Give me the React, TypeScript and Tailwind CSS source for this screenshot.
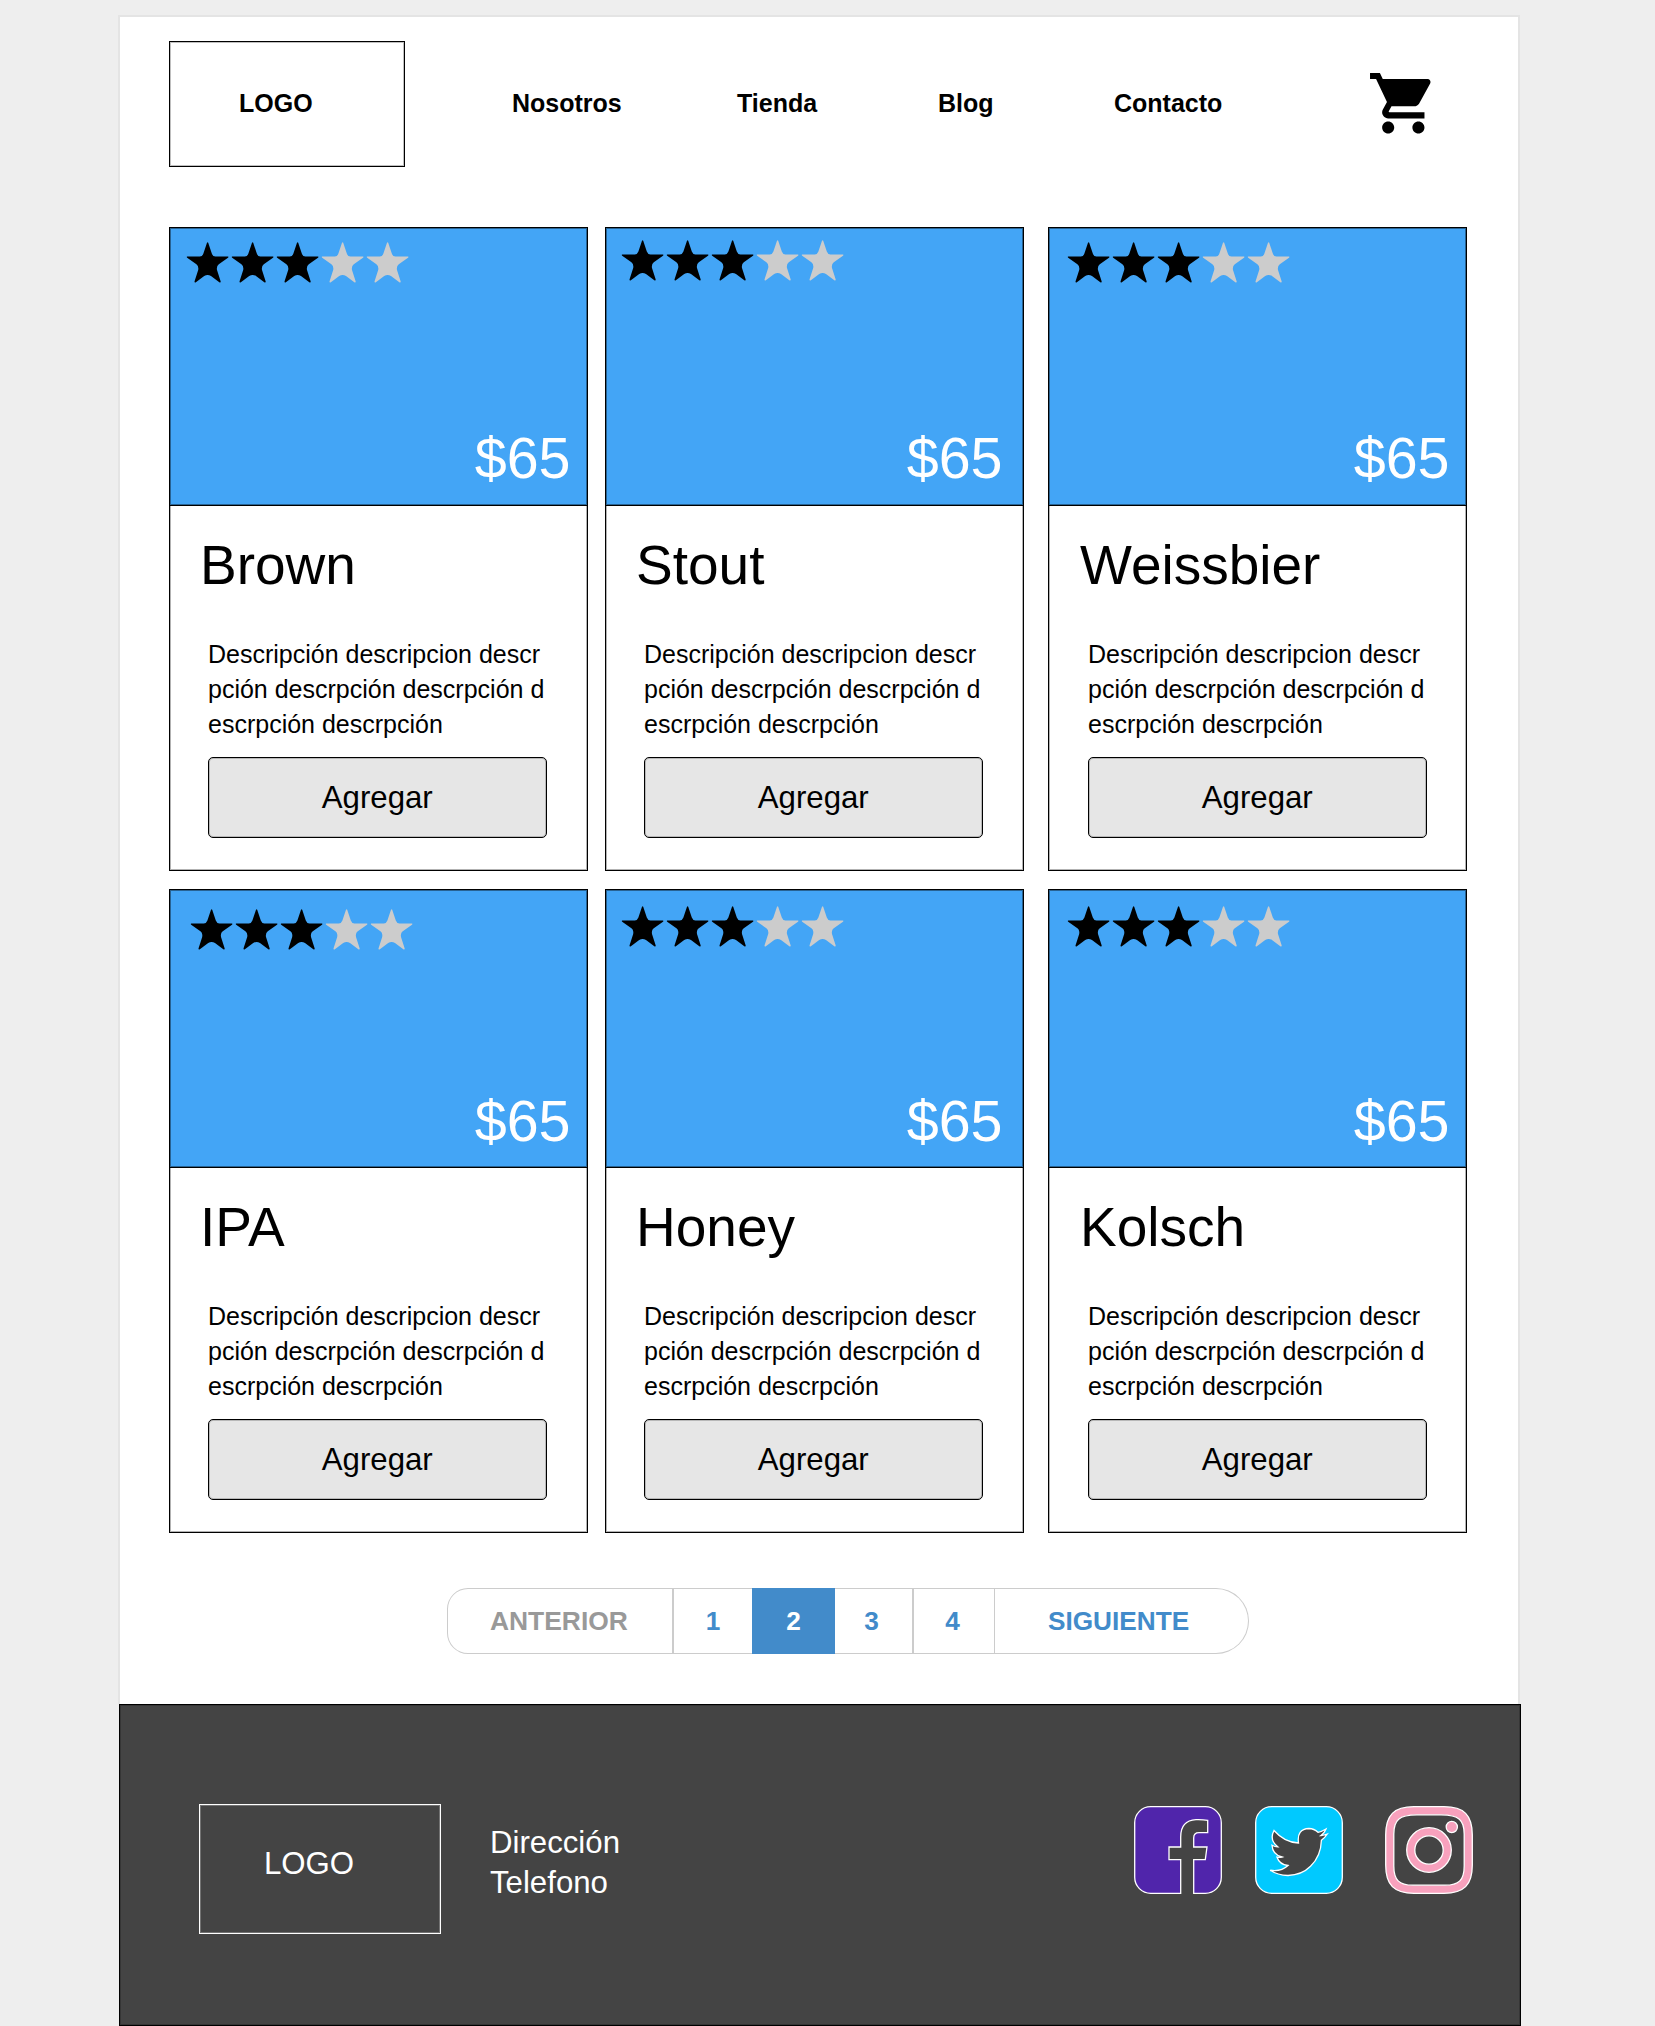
import { MdShoppingCart } from "react-icons/md";

type Beer = { name: string; starX: number; starY: number; priceX: number; priceY: number; shift: number };

const beers: Beer[] = [
  { name: "Brown", starX: 17, starY: 14, priceX: 16.5, priceY: 15, shift: 0 },
  { name: "Stout", starX: 16, starY: 12, priceX: 20.5, priceY: 15, shift: 0 },
  { name: "Weissbier", starX: 19, starY: 14, priceX: 16.5, priceY: 15, shift: 1 },
  { name: "IPA", starX: 21, starY: 19, priceX: 16.5, priceY: 14, shift: 0 },
  { name: "Honey", starX: 16, starY: 16, priceX: 20.5, priceY: 14, shift: 0 },
  { name: "Kolsch", starX: 19, starY: 16, priceX: 16.5, priceY: 14, shift: 1 },
];

function Star({ on }: { on: boolean }) {
  return (
    <svg
      viewBox="0.4 0 45 41"
      className={on ? "h-[41px] w-[45px] overflow-visible text-black" : "h-[41px] w-[45px] overflow-visible text-[#cccccc]"}
    >
      <path
        fill="currentColor"
        d="M21.6 .7Q21 -.2 20.4 .7L16.8 11.6Q15.8 14.5 13.2 14.5L.6 14.5Q-.4 15 .6 15.8L9.8 22.2Q12.3 24.2 11.6 28L7.9 39.4Q7.8 41 9.3 40.2L17.6 34Q21 31.8 24.4 34L32.7 40.2Q34.2 41 34.1 39.4L30.4 28Q29.7 24.2 32.2 22.2L41.4 15.8Q42.4 15 41.4 14.5L28.8 14.5Q26.2 14.5 25.2 11.6Z"
      />
    </svg>
  );
}

function Card({ beer }: { beer: Beer }) {
  return (
    <article className="flex h-[644px] w-[419px] flex-col border border-black shadow-[inset_0_0_0_1px_rgba(0,0,0,0.3)]">
      <div
        className="flex h-[278px] shrink-0 flex-col justify-between border-b border-black bg-[#43a5f6] shadow-[inset_0_0_0_1px_rgba(0,0,0,0.4)]"
        style={{ paddingTop: beer.starY, paddingLeft: beer.starX, paddingRight: beer.priceX, paddingBottom: beer.priceY }}
      >
        <div className="flex">
          {[0, 1, 2, 3, 4].map((i) => (
            <Star key={i} on={i < 3} />
          ))}
        </div>
        <p className="self-end text-[57.4px] leading-[64px] text-white">$65</p>
      </div>
      <div className="flex flex-col items-start" style={{ paddingLeft: beer.shift }}>
        <h2 className="mt-[28px] ml-[30px] text-[55px] leading-[62px]">{beer.name}</h2>
        <p className="mt-[41px] ml-[38px] text-[25px] leading-[35px] whitespace-nowrap">
          Descripción descripcion descr
          <br />
          pción descrpción descrpción d
          <br />
          escrpción descrpción
        </p>
        <button className="mt-[15px] ml-[38px] h-[81px] w-[338.5px] rounded-[5px] border border-black bg-[#e6e6e6] text-[31.2px] leading-[36px] shadow-[inset_0_0_0_1px_rgba(0,0,0,0.2)]">
          Agregar
        </button>
      </div>
    </article>
  );
}

function Facebook() {
  return (
    <svg viewBox="0 0 88 88" className="h-[88px] w-[88px]">
      <path
        fill="#5025ab"
        stroke="#fff"
        strokeWidth="1.3"
        d="M16.7 .7H71.3A16 16 0 0 1 87.3 16.7V71.3A16 16 0 0 1 71.3 87.3H59.7V53.7H71.3L73 41H59.7V32Q59.7 26.7 65 26.7H73.7V14.3Q68 13.5 62 13.7Q46.7 14.5 46.7 31V41H35V53.7H46.7V87.3H16.7A16 16 0 0 1 .7 71.3V16.7A16 16 0 0 1 16.7 .7Z"
      />
    </svg>
  );
}

function Twitter() {
  return (
    <svg viewBox="0 0 88 88" className="h-[88px] w-[88px]">
      <rect x=".7" y=".7" width="86.6" height="86.6" rx="16" fill="#00c9ff" stroke="#fff" strokeWidth="1.3" />
      <path
        fill="#444"
        stroke="#fff"
        strokeWidth="1.3"
        d="M15.2 64.2Q26 66 33 59.5Q24.5 58.5 22 51.2Q24.5 51.7 27 51Q17.5 48.5 17 39.2Q20 40.8 22.7 40.8Q14 34 19 24.5Q29.5 36.5 43.5 37Q41.5 23 54 22.5Q59 22.5 63 26.3Q67 25.5 71 23Q69.5 27 66 29.5Q69 29.3 72.3 28Q70 31.6 66.4 34.2Q66 50 55.5 60.3Q47 69 33 69.5Q22.5 69.3 15.2 64.2Z"
      />
    </svg>
  );
}

function Instagram() {
  return (
    <svg viewBox="0 0 88 88" className="h-[88px] w-[88px]" stroke="#fff" strokeWidth="1.3">
      <path
        fill="#f8a1bd"
        fillRule="evenodd"
        d="M29 .7H59C79 .7 87.3 9 87.3 29V59C87.3 79 79 87.3 59 87.3H29C9 87.3 .7 79 .7 59V29C.7 9 9 .7 29 .7ZM32 8.8C14 8.8 8.8 14 8.8 28V60C8.8 74 14 79.2 28 79.2H60C74 79.2 79.2 74 79.2 60V28C79.2 14 74 8.8 56 8.8Z"
      />
      <path
        fill="#f8a1bd"
        fillRule="evenodd"
        d="M44 21.7A22.3 22.3 0 1 1 44 66.3A22.3 22.3 0 1 1 44 21.7ZM44 29.8A14.2 14.2 0 1 0 44 58.2A14.2 14.2 0 1 0 44 29.8Z"
      />
      <circle cx="66.8" cy="21" r="5.6" fill="#f8a1bd" />
    </svg>
  );
}

export default function App() {
  return (
    <div className="h-[2026px] w-[1655px] overflow-hidden bg-[#eeeeee] pt-[15px] pl-[118px] font-['Liberation_Sans',Arial,sans-serif] text-black">
      <main className="h-[1689px] w-[1402px] border-2 border-b-0 border-[#e4e4e4] bg-white">
        <header className="flex pt-[24px] pl-[49px]">
          <div className="flex h-[126px] w-[236px] items-center border border-black pl-[69px] text-[25px] font-bold shadow-[inset_0_0_0_1px_rgba(0,0,0,0.25)]">
            LOGO
          </div>
          <nav className="flex h-[126px] items-center text-[25px] font-bold">
            <a className="ml-[107px] w-[225px]">Nosotros</a>
            <a className="w-[201px]">Tienda</a>
            <a className="w-[176px]">Blog</a>
            <a className="w-[253px]">Contacto</a>
          </nav>
          <MdShoppingCart className="mt-[26px] size-[72.6px]" />
        </header>
        <section className="mt-[60px] ml-[49px] grid grid-cols-[436px_443px_419px] gap-y-[18px]">
          {beers.map((b) => (
            <Card key={b.name} beer={b} />
          ))}
        </section>
        <div className="mt-[55px] ml-[327px] flex h-[66px] w-[802px] text-[26.2px] leading-[64px] font-bold text-[#428bca]">
          <span className="w-[227px] rounded-l-[21px] border border-r-2 border-[#cccccc] pl-[42px] text-[26.4px] text-[#999999]">
            ANTERIOR
          </span>
          <span className="w-[78px] border-y border-[#cccccc] text-center">1</span>
          <span className="w-[83px] border-y border-[#428bca] bg-[#428bca] text-center text-white">2</span>
          <span className="w-[79px] border-y border-r-2 border-[#cccccc] pr-[4px] text-center">3</span>
          <span className="w-[81px] border-y border-r border-[#cccccc] pr-[3px] text-center">4</span>
          <span className="flex-1 rounded-r-[33px] border border-l-0 border-[#cccccc] pl-[53px]">SIGUIENTE</span>
        </div>
      </main>
      <footer className="ml-px flex h-[322px] w-[1402px] border border-black bg-[#444444] text-[31.2px] text-white shadow-[inset_0_0_0_1px_rgba(0,0,0,0.2)]">
        <div className="mt-[99px] ml-[79px] h-[130px] w-[242px] border border-white pt-[39px] pl-[64px] leading-[40px] shadow-[inset_0_0_0_1px_rgba(255,255,255,0.25)]">
          LOGO
        </div>
        <p className="mt-[118px] ml-[49px] w-[644px] leading-[40px]">
          Dirección
          <br />
          Telefono
        </p>
        <div className="mt-[101px] flex">
          <Facebook />
          <div className="ml-[33px]">
            <Twitter />
          </div>
          <div className="ml-[42px]">
            <Instagram />
          </div>
        </div>
      </footer>
    </div>
  );
}
